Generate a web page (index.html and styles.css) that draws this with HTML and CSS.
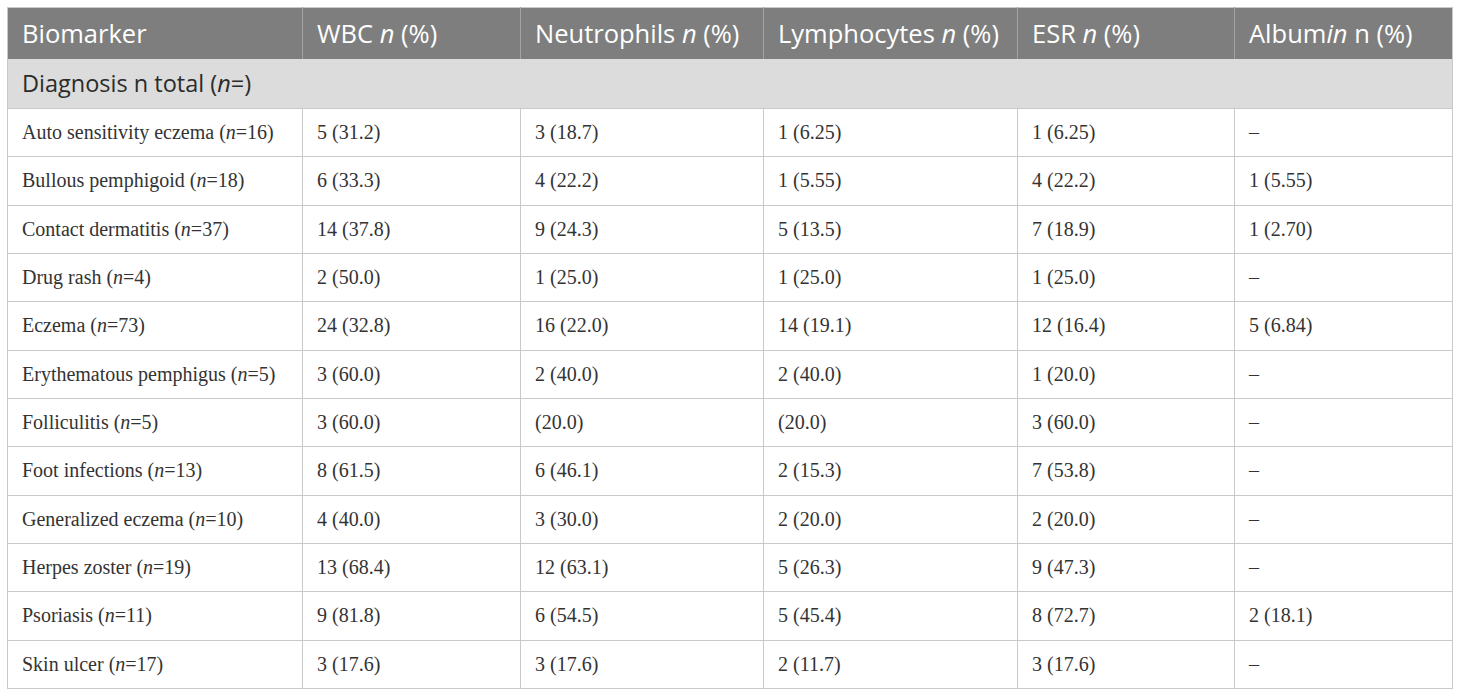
FILE: index.html
```html
<!DOCTYPE html>
<html lang="en">
<head>
  <meta charset="UTF-8">
  <title>Biomarkers by diagnosis</title>
  <link rel="stylesheet" href="styles.css">
</head>
<body>
  <table class="data-table">
    <colgroup>
      <col class="c1"><col class="c2"><col class="c3"><col class="c4"><col class="c5"><col class="c6">
    </colgroup>
    <thead>
      <tr class="head-row">
        <th>Biomarker</th>
        <th>WBC <i>n</i> (%)</th>
        <th>Neutrophils <i>n</i> (%)</th>
        <th>Lymphocytes <i>n</i> (%)</th>
        <th>ESR <i>n</i> (%)</th>
        <th>Album<i>in</i> n (%)</th>
      </tr>
      <tr class="group-row">
        <th colspan="6">Diagnosis n total (<i>n</i>=)</th>
      </tr>
    </thead>
    <tbody>
      <tr><td>Auto sensitivity eczema (<i>n</i>=16)</td><td>5 (31.2)</td><td>3 (18.7)</td><td>1 (6.25)</td><td>1 (6.25)</td><td>–</td></tr>
      <tr><td>Bullous pemphigoid (<i>n</i>=18)</td><td>6 (33.3)</td><td>4 (22.2)</td><td>1 (5.55)</td><td>4 (22.2)</td><td>1 (5.55)</td></tr>
      <tr><td>Contact dermatitis (<i>n</i>=37)</td><td>14 (37.8)</td><td>9 (24.3)</td><td>5 (13.5)</td><td>7 (18.9)</td><td>1 (2.70)</td></tr>
      <tr><td>Drug rash (<i>n</i>=4)</td><td>2 (50.0)</td><td>1 (25.0)</td><td>1 (25.0)</td><td>1 (25.0)</td><td>–</td></tr>
      <tr><td>Eczema (<i>n</i>=73)</td><td>24 (32.8)</td><td>16 (22.0)</td><td>14 (19.1)</td><td>12 (16.4)</td><td>5 (6.84)</td></tr>
      <tr><td>Erythematous pemphigus (<i>n</i>=5)</td><td>3 (60.0)</td><td>2 (40.0)</td><td>2 (40.0)</td><td>1 (20.0)</td><td>–</td></tr>
      <tr><td>Folliculitis (<i>n</i>=5)</td><td>3 (60.0)</td><td>(20.0)</td><td>(20.0)</td><td>3 (60.0)</td><td>–</td></tr>
      <tr><td>Foot infections (<i>n</i>=13)</td><td>8 (61.5)</td><td>6 (46.1)</td><td>2 (15.3)</td><td>7 (53.8)</td><td>–</td></tr>
      <tr><td>Generalized eczema (<i>n</i>=10)</td><td>4 (40.0)</td><td>3 (30.0)</td><td>2 (20.0)</td><td>2 (20.0)</td><td>–</td></tr>
      <tr><td>Herpes zoster (<i>n</i>=19)</td><td>13 (68.4)</td><td>12 (63.1)</td><td>5 (26.3)</td><td>9 (47.3)</td><td>–</td></tr>
      <tr><td>Psoriasis (<i>n</i>=11)</td><td>9 (81.8)</td><td>6 (54.5)</td><td>5 (45.4)</td><td>8 (72.7)</td><td>2 (18.1)</td></tr>
      <tr><td>Skin ulcer (<i>n</i>=17)</td><td>3 (17.6)</td><td>3 (17.6)</td><td>2 (11.7)</td><td>3 (17.6)</td><td>–</td></tr>
    </tbody>
  </table>
</body>
</html>
```

FILE: styles.css
```css
* { box-sizing: border-box; }

body {
  margin: 0;
  padding: 7px 8px 0 7px;
  background: #fff;
  color: #333;
}

.data-table {
  width: 1445px;
  table-layout: fixed;
  border-collapse: collapse;
  border: 1px solid #c9c9c9;
}

.c1 { width: 295px; }
.c2 { width: 218px; }
.c3 { width: 243px; }
.c4 { width: 254px; }
.c5 { width: 217px; }
.c6 { width: 218px; }

th {
  font-family: "Open Sans", "Noto Sans", sans-serif;
  font-weight: 400;
  text-align: left;
  white-space: nowrap;
}

.head-row th {
  background: #7d7e7d;
  color: #fff;
  font-size: 25.5px;
  height: 51px;
  padding: 0 14px;
  border-left: 1px solid #a3a3a3;
}

.head-row th:first-child { border-left: none; }

.group-row th {
  background: #dcdcdc;
  color: #2b2b2b;
  font-size: 23.5px;
  height: 50px;
  padding: 0 14px;
  border-bottom: 1px solid #c9c9c9;
}

td {
  font-family: "Liberation Serif", "Times New Roman", serif;
  font-size: 20px;
  color: #333;
  height: 48.33px;
  padding: 0 14px;
  border: 1px solid #c9c9c9;
  white-space: nowrap;
}
```
